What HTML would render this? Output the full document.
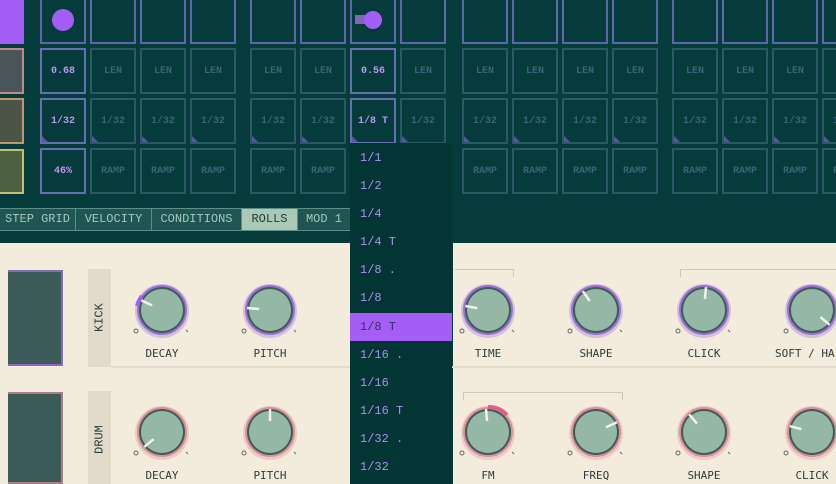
<!DOCTYPE html>
<html><head><meta charset="utf-8"><style>
*{margin:0;padding:0;box-sizing:border-box}
body{width:836px;height:484px;overflow:hidden;background:#053b3a;font-family:"Liberation Mono","DejaVu Sans Mono",monospace;position:relative}
.a{position:absolute}
.cell{position:absolute;width:46px;height:46px;border:2px solid #2e5766;color:#3a6478;font-size:10px;display:flex;align-items:center;justify-content:center;font-weight:bold}
.cell.on{border-color:#6470b0;color:#b79af0}
.tab{position:absolute;top:208px;height:23px;border:1px solid #5e8f86;background:#1f5553;color:#a5c9bd;font-size:12px;line-height:21px;text-align:center}
.lbl{position:absolute;font-size:11px;color:#2f3c3a;width:100px;text-align:center;font-family:"DejaVu Sans Mono",monospace}
.dd{position:absolute;left:350px;width:102px;height:28px;color:#a98ff0;font-size:12px;line-height:28px;padding-left:10px}
</style></head><body>
<div class="a" style="left:0;top:0;width:24px;height:44px;background:#a45ef5"></div>
<div class="a" style="left:0;top:48px;width:24px;height:46px;background:#4a5559;border:2px solid #c08a8c;border-left:0"></div>
<div class="a" style="left:0;top:98px;width:24px;height:46px;background:#4a5548;border:2px solid #c3966e;border-left:0"></div>
<div class="a" style="left:0;top:149px;width:24px;height:45px;background:#4d6040;border:2px solid #c5c070;border-left:0"></div>
<div id="grid"></div>
<div class="tab" style="left:0;width:76px;border-left:0">STEP GRID</div>
<div class="tab" style="left:75px;width:77px">VELOCITY</div>
<div class="tab" style="left:151px;width:91px">CONDITIONS</div>
<div class="tab" style="left:241px;width:57px;background:#a9c8b6;color:#1f3a36">ROLLS</div>
<div class="tab" style="left:297px;width:54px">MOD 1</div>
<div class="a" style="left:0;top:243px;width:836px;height:241px;background:#f3ebdc"></div>
<div class="a" style="left:440px;top:230px;width:13px;height:254px;background:#053b3a"></div>
<div class="a" style="left:8px;top:270px;width:55px;height:96px;background:#3c5a58;border:2px solid #8a6ab8;border-left:0"></div>
<div class="a" style="left:8px;top:392px;width:55px;height:92px;background:#3c5a58;border:2px solid #b07b86;border-left:0"></div>
<div class="a" style="left:88px;top:269px;width:23px;height:98px;background:#e2dacb"></div>
<div class="a" style="left:88px;top:391px;width:23px;height:93px;background:#e2dacb"></div>
<div class="a" style="left:88px;top:300px;width:23px;height:36px;font-size:12px;color:#2f3c3a;writing-mode:vertical-rl;transform:rotate(180deg);display:flex;align-items:center;justify-content:center">KICK</div>
<div class="a" style="left:88px;top:422px;width:23px;height:36px;font-size:12px;color:#2f3c3a;writing-mode:vertical-rl;transform:rotate(180deg);display:flex;align-items:center;justify-content:center">DRUM</div>
<div class="a" style="left:111px;top:366px;width:725px;height:2px;background:#e2dacb"></div>
<div class="a" style="left:455px;top:269px;width:59px;height:8px;border:1px solid #cfc6b7;border-bottom:0;border-left:0"></div>
<div class="a" style="left:680px;top:269px;width:160px;height:8px;border:1px solid #cfc6b7;border-bottom:0"></div>
<div class="a" style="left:463px;top:392px;width:160px;height:8px;border:1px solid #cfc6b7;border-bottom:0"></div>
<svg class="a" style="left:0;top:0" width="836" height="484" id="kn"></svg>
<div class="lbl" style="left:112px;top:347px">DECAY</div>
<div class="lbl" style="left:220px;top:347px">PITCH</div>
<div class="lbl" style="left:438px;top:347px">TIME</div>
<div class="lbl" style="left:546px;top:347px">SHAPE</div>
<div class="lbl" style="left:654px;top:347px">CLICK</div>
<div class="lbl" style="left:762px;top:347px;text-align:left;padding-left:13px">SOFT / HA</div>
<div class="lbl" style="left:112px;top:469px">DECAY</div>
<div class="lbl" style="left:220px;top:469px">PITCH</div>
<div class="lbl" style="left:438px;top:469px">FM</div>
<div class="lbl" style="left:546px;top:469px">FREQ</div>
<div class="lbl" style="left:654px;top:469px">SHAPE</div>
<div class="lbl" style="left:762px;top:469px">CLICK</div>
<div class="a" style="left:350px;top:143px;width:102px;height:341px;background:#043535"></div>
<div class="dd" style="top:144px">1/1</div>
<div class="dd" style="top:172px">1/2</div>
<div class="dd" style="top:200px">1/4</div>
<div class="dd" style="top:228px">1/4 T</div>
<div class="dd" style="top:256px">1/8 .</div>
<div class="dd" style="top:284px">1/8</div>
<div class="dd" style="top:313px;background:#a45ef5;color:#3a2a66">1/8 T</div>
<div class="dd" style="top:341px">1/16 .</div>
<div class="dd" style="top:369px">1/16</div>
<div class="dd" style="top:397px">1/16 T</div>
<div class="dd" style="top:425px">1/32 .</div>
<div class="dd" style="top:453px">1/32</div>
<script>
var xs=[40,90,140,190,250,300,350,400,462,512,562,612,672,722,772,822];
var rows=[-2,48,98,148];var h='';
xs.forEach(function(x,i){rows.forEach(function(y,r){
 var on=(i==0||i==6);var t='';
 if(r==1)t=i==0?'0.68':i==6?'0.56':'LEN';
 if(r==2)t=i==0?'1/32':i==6?'1/8 T':'1/32';
 if(r==3)t=i==0?'46%':'RAMP';
 if(i==6&&r==3)return;
 var bc=(r==0)?'#5a68a8':'';
 h+='<div class="cell'+(on&&r>0?' on':'')+'" style="left:'+x+'px;top:'+y+'px;'+(bc?'border-color:'+bc:'')+'">'+t+'</div>';
 if(r==2)h+='<div class="a" style="left:'+(x+2)+'px;top:'+(y+38)+'px;width:0;height:0;border-left:6px solid #5a55a0;border-top:6px solid transparent"></div>';
});});
h+='<div class="a" style="left:52px;top:9px;width:22px;height:22px;border-radius:50%;background:#a45ef5"></div>';
h+='<div class="a" style="left:355px;top:15px;width:12px;height:9px;background:#7a6ab8"></div><div class="a" style="left:364px;top:11px;width:18px;height:18px;border-radius:50%;background:#a45ef5"></div>';
document.getElementById('grid').innerHTML=h;
var K=[[162,310,-65,'k'],[270,310,-85,'k'],[488,310,-80,'k'],[596,310,-35,'k'],[704,310,5,'k'],[812,310,130,'k'],
[162,432,-130,'d'],[270,432,0,'d'],[488,432,-5,'d'],[596,432,65,'d'],[704,432,-40,'d'],[812,432,-75,'d']];
var s='';
K.forEach(function(k){var x=k[0],y=k[1],a=k[2]*Math.PI/180,c=k[3]=='k'?'#9c6fd6':'#dc8f98';
s+='<circle cx="'+x+'" cy="'+(y+1)+'" r="27" fill="'+c+'" opacity="0.35"/>';
s+='<circle cx="'+x+'" cy="'+y+'" r="25" fill="'+c+'"/>';
s+='<circle cx="'+x+'" cy="'+y+'" r="23" fill="#3f5d58"/>';
s+='<circle cx="'+x+'" cy="'+y+'" r="21" fill="#95b8a6"/>';
s+='<line x1="'+(x+Math.sin(a)*11)+'" y1="'+(y-Math.cos(a)*11)+'" x2="'+(x+Math.sin(a)*23)+'" y2="'+(y-Math.cos(a)*23)+'" stroke="#f4f1ea" stroke-width="2.5"/>';
s+='<circle cx="'+(x-26)+'" cy="'+(y+21)+'" r="2" fill="none" stroke="#666" stroke-width="1"/>';
s+='<line x1="'+(x+24)+'" y1="'+(y+20)+'" x2="'+(x+26)+'" y2="'+(y+22)+'" stroke="#666"/>';
});
s+='<path d="M488 407 A25 25 0 0 1 507 415" stroke="#e0608a" stroke-width="4" fill="none"/>';
s+='<path d="M137 306 A25 25 0 0 1 142 296" stroke="#a45ef5" stroke-width="4" fill="none"/>';
document.getElementById('kn').innerHTML=s;
</script>
</body></html>
